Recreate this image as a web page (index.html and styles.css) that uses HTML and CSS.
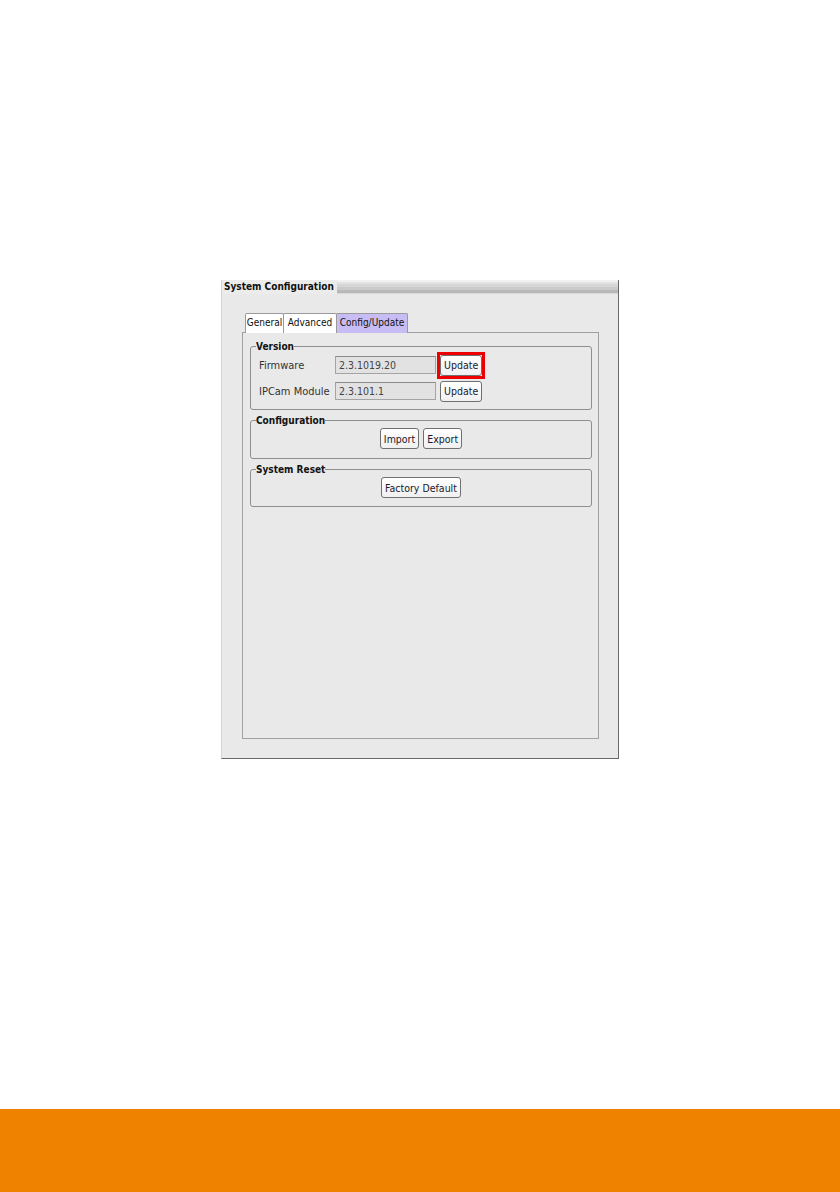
FILE: index.html
```html
<!DOCTYPE html>
<html>
<head>
<meta charset="utf-8">
<link rel="stylesheet" href="styles.css">
</head>
<body>
<div class="page">
  <div class="window">
    <div class="titlebar">
      <span class="title">System Configuration</span>
      <span class="title-stripe"></span>
    </div>
    <div class="win-body">
      <div class="tabs">
        <div class="tab">General</div>
        <div class="tab">Advanced</div>
        <div class="tab active">Config/Update</div>
      </div>
      <div class="panel">
        <fieldset class="group version">
          <legend>Version</legend>
          <div class="row">
            <span class="label">Firmware</span>
            <span class="textbox">2.3.1019.20</span>
            <span class="highlight"><button class="btn">Update</button></span>
          </div>
          <div class="row">
            <span class="label">IPCam Module</span>
            <span class="textbox">2.3.101.1</span>
            <button class="btn">Update</button>
          </div>
        </fieldset>
        <fieldset class="group centered config">
          <legend>Configuration</legend>
          <div class="btnrow">
            <button class="btn">Import</button>
            <button class="btn">Export</button>
          </div>
        </fieldset>
        <fieldset class="group centered">
          <legend>System Reset</legend>
          <div class="btnrow">
            <button class="btn">Factory Default</button>
          </div>
        </fieldset>
      </div>
    </div>
  </div>
  <div class="spacer"></div>
  <div class="footer"></div>
</div>
</body>
</html>
```
FILE: styles.css
```css
html, body {
  margin: 0;
  padding: 0;
  background: #ffffff;
}
.page {
  width: 840px;
  height: 1192px;
  display: flex;
  flex-direction: column;
  font-family: "DejaVu Sans Condensed", "Liberation Sans Narrow", "Liberation Sans", sans-serif;
  font-size: 11px;
  color: #222;
}
.window {
  margin: 280px 0 0 221px;
  width: 398px;
  box-sizing: border-box;
  background: #e9e9e9;
  border-left: 1px solid #d4d4d4;
  border-right: 1px solid #6a6a6a;
  border-bottom: 1px solid #6a6a6a;
}
.titlebar {
  height: 14px;
  display: flex;
  align-items: stretch;
  background: #ececec;
}
.title {
  font-weight: bold;
  font-size: 10px;
  line-height: 14px;
  padding-left: 2px;
  color: #111;
  white-space: nowrap;
}
.title-stripe {
  flex: 1;
  margin-left: 3px;
  background: linear-gradient(to bottom, #f2f2f2 0, #f2f2f2 2px, #e2e2e2 2px, #e2e2e2 4px, #d6d6d6 4px, #d6d6d6 7px, #cacaca 7px, #cacaca 10px, #b8b8b8 10px, #b8b8b8 13px, #d8d8d8 13px);
}
.win-body {
  padding: 19px 19px 19px 20px;
}
.tabs {
  display: flex;
  padding-left: 3px;
  height: 19px;
  position: relative;
  z-index: 1;
}
.tab {
  box-sizing: border-box;
  height: 20px;
  padding: 0;
  text-align: center;
  line-height: 17px;
  background: #ffffff;
  border: 1px solid #9a9a9a;
  border-bottom: none;
  border-radius: 2px 2px 0 0;
  font-size: 10px;
  color: #111;
  margin-right: -1px;
}
.tab:nth-child(1) { width: 39px; }
.tab:nth-child(2) { width: 54px; }
.tab.active {
  width: 72px;
  background: #c8bcf4;
}
.panel {
  box-sizing: border-box;
  height: 407px;
  border: 1px solid #a0a0a0;
  padding: 7px 6px 0 7px;
  display: flex;
  flex-direction: column;
  gap: 4px;
}
.group {
  margin: 0;
  border: 1px solid #8e8e8e;
  border-radius: 3px;
  padding: 0 6px 6px 8px;
  min-width: 0;
}
.group legend {
  font-weight: bold;
  font-size: 10px;
  color: #111;
  padding: 0;
  margin-left: -3px;
  line-height: 13px;
}
.row {
  display: flex;
  align-items: center;
  height: 24px;
  margin-top: 0;
}
.row + .row {
  margin-top: 2px;
}
.label {
  width: 76px;
  color: #333;
  font-size: 11px;
}
.textbox {
  box-sizing: border-box;
  width: 101px;
  height: 18px;
  line-height: 16px;
  padding-left: 3px;
  background: #e2e2e2;
  border: 1px solid #a4a4a4;
  border-top-color: #8a8a8a;
  color: #444;
  font-size: 10.5px;
  margin-right: 4px;
}
.btn {
  box-sizing: border-box;
  height: 21px;
  padding: 0 3px;
  font-family: inherit;
  font-size: 10.5px;
  color: #1a1a2e;
  background: linear-gradient(to bottom, #ffffff, #f0f0f0);
  border: 1px solid #707070;
  border-radius: 3px;
  margin: 0;
}
.highlight {
  display: inline-flex;
  border: 3px solid #ee0000;
  margin: -3px;
}
.btnrow {
  display: flex;
  justify-content: center;
  gap: 4px;
  padding-top: 1px;
  margin-left: -2px;
}
.centered {
  padding-bottom: 8px;
}
.centered.config {
  padding-bottom: 9px;
}
.spacer {
  flex: 1;
}
.footer {
  height: 83px;
  background: #ef8300;
}
```
